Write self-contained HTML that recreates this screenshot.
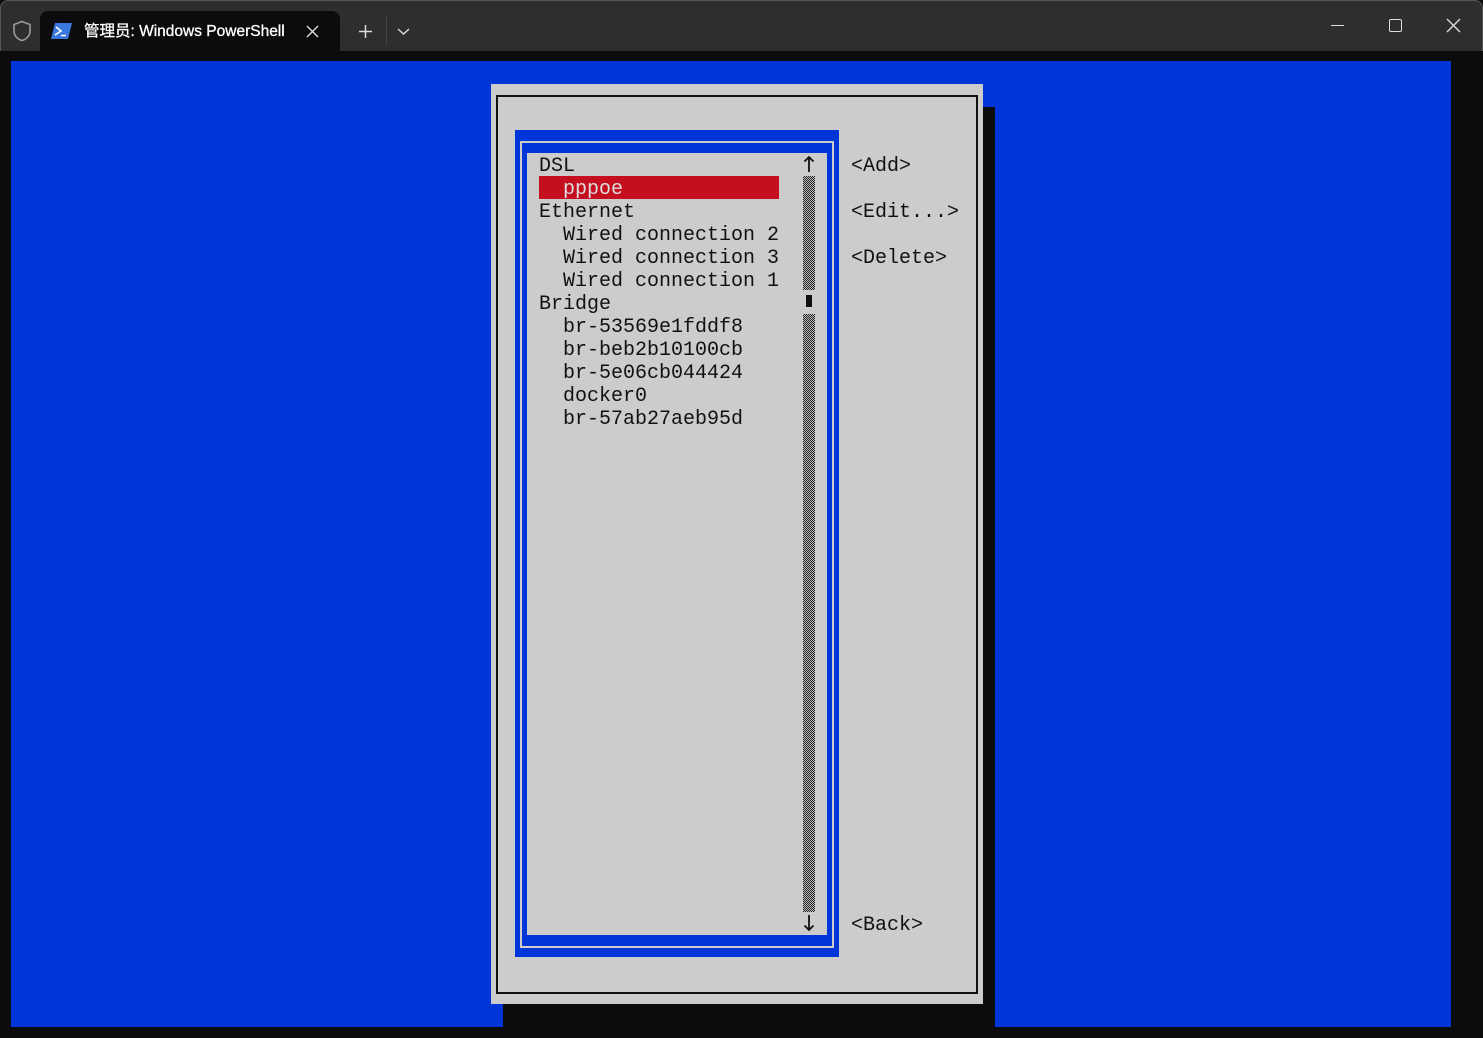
<!DOCTYPE html>
<html><head><meta charset="utf-8"><style>
*{margin:0;padding:0;box-sizing:border-box}
body{width:1483px;height:1038px;background:#0c0c0c;position:relative;overflow:hidden;font-family:"Liberation Mono",monospace}
div{position:absolute}
.t{font-size:20px;line-height:23px;color:#111;white-space:pre;height:23px;margin-top:2px}
.chk{background:repeating-conic-gradient(#222 0 25%,#bbb 0 50%) 0 0/2px 2px}
</style></head><body>
<div style="left:0;top:0;width:1483px;height:51px;background:#2e2e2e;border:1px solid #555;border-bottom:none;border-radius:8px 8px 0 0"></div>
<div style="left:40px;top:11px;width:300px;height:41px;background:#0c0c0c;border-radius:8px 8px 0 0"></div>
<svg style="position:absolute;left:12px;top:20px" width="20" height="22" viewBox="0 0 20 22"><path d="M10 1.5 L18 4.5 V11 C18 16 14 19.5 10 20.5 C6 19.5 2 16 2 11 V4.5 Z" fill="none" stroke="#9a9a9a" stroke-width="1.6"/></svg>
<svg style="position:absolute;left:51px;top:23px" width="21" height="16" viewBox="0 0 21 16"><path d="M4 0 H21 L17 16 H0 Z" fill="#3a78e0"/><path d="M5 4 L10 8 L4 12" fill="none" stroke="#fff" stroke-width="1.6"/><path d="M10 12.5 H15" stroke="#fff" stroke-width="1.5"/></svg>
<div style="left:84px;top:21px;font-family:'Liberation Sans','Noto Sans CJK SC',sans-serif;font-size:15.5px;color:#fff;line-height:21px;-webkit-text-stroke:0.3px #fff">管理员: Windows PowerShell</div>
<svg style="position:absolute;left:306px;top:25px" width="13" height="13"><path d="M1 1 L12 12 M12 1 L1 12" stroke="#ddd" stroke-width="1.4"/></svg>
<svg style="position:absolute;left:358px;top:24px" width="15" height="15"><path d="M7.5 1 V14 M1 7.5 H14" stroke="#ddd" stroke-width="1.5"/></svg>
<div style="left:386px;top:16px;width:1px;height:30px;background:#444"></div>
<svg style="position:absolute;left:397px;top:27px" width="13" height="9"><path d="M1 2 L6.5 7 L12 2" fill="none" stroke="#ddd" stroke-width="1.4"/></svg>
<div style="left:1331px;top:25px;width:13px;height:1px;background:#ddd"></div>
<div style="left:1389px;top:19px;width:13px;height:13px;border:1.4px solid #ddd;border-radius:2px"></div>
<svg style="position:absolute;left:1446px;top:18px" width="15" height="15"><path d="M1 1 L14 14 M14 1 L1 14" stroke="#ddd" stroke-width="1.4"/></svg>

<div style="left:11px;top:61px;width:1440px;height:966px;background:#0035d9"></div>
<div style="left:503px;top:107px;width:492px;height:920px;background:#0c0c0c"></div>
<div style="left:491px;top:84px;width:492px;height:920px;background:#cccccc"></div>
<div style="left:496px;top:95px;width:482px;height:899px;border:2px solid #111"></div>
<div style="left:515px;top:130px;width:324px;height:827px;background:#0035d9"></div>
<div style="left:520px;top:141px;width:314px;height:807px;border:2px solid #ccc"></div>
<div style="left:527px;top:153px;width:300px;height:782px;background:#cccccc"></div>
<div style="left:539px;top:176px;width:240px;height:23px;background:#c50f1f"></div>

<div class="t" style="left:539px;top:153px">DSL</div>
<div class="t" style="left:539px;top:176px;color:#ddd">  pppoe</div>
<div class="t" style="left:539px;top:199px">Ethernet</div>
<div class="t" style="left:539px;top:222px">  Wired connection 2</div>
<div class="t" style="left:539px;top:245px">  Wired connection 3</div>
<div class="t" style="left:539px;top:268px">  Wired connection 1</div>
<div class="t" style="left:539px;top:291px">Bridge</div>
<div class="t" style="left:539px;top:314px">  br-53569e1fddf8</div>
<div class="t" style="left:539px;top:337px">  br-beb2b10100cb</div>
<div class="t" style="left:539px;top:360px">  br-5e06cb044424</div>
<div class="t" style="left:539px;top:383px">  docker0</div>
<div class="t" style="left:539px;top:406px">  br-57ab27aeb95d</div>

<svg style="position:absolute;left:803px;top:155px" width="12" height="18"><path d="M6 2 V17 M1.5 6.5 L6 2 L10.5 6.5" fill="none" stroke="#111" stroke-width="1.8"/></svg>
<div class="chk" style="left:803px;top:176px;width:12px;height:114px"></div>
<div style="left:806px;top:295px;width:6px;height:12px;background:#111"></div>
<div class="chk" style="left:803px;top:314px;width:12px;height:598px"></div>
<svg style="position:absolute;left:803px;top:914px" width="12" height="18"><path d="M6 1 V16 M1.5 11.5 L6 16 L10.5 11.5" fill="none" stroke="#111" stroke-width="1.8"/></svg>

<div class="t" style="left:851px;top:153px">&lt;Add&gt;</div>
<div class="t" style="left:851px;top:199px">&lt;Edit...&gt;</div>
<div class="t" style="left:851px;top:245px">&lt;Delete&gt;</div>
<div class="t" style="left:851px;top:912px">&lt;Back&gt;</div>
</body></html>
